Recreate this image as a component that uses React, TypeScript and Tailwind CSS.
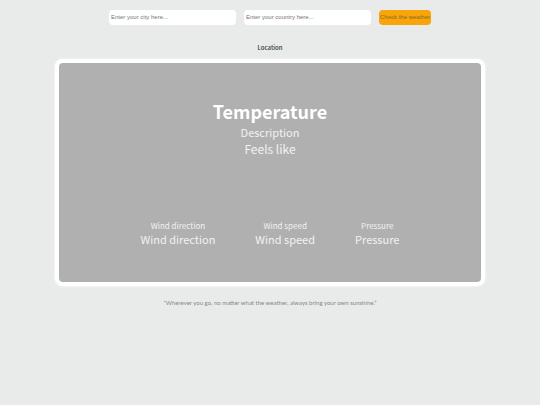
import type { FormEvent } from "react";

type FieldProps = {
  id: string;
  label: string;
  placeholder: string;
};

const details = [
  { label: "Wind direction", value: "Wind direction" },
  { label: "Wind speed", value: "Wind speed" },
  { label: "Pressure", value: "Pressure" }
];

function Field({ id, label, placeholder }: FieldProps) {
  return (
    <div className="w-[127px]">
      <input
        id={id}
        name={id}
        type="text"
        aria-label={label}
        placeholder={placeholder}
        className="block h-[15px] w-full rounded-[4px] bg-white px-[2px] font-['Liberation_Sans',sans-serif] text-[6px] leading-[15px] text-[#333333] placeholder:text-[#757575]"
      />
    </div>
  );
}

export default function App() {
  function handleSubmit(event: FormEvent<HTMLFormElement>) {
    event.preventDefault();
  }

  return (
    <main className="min-h-screen bg-[#e8ebea] pt-[10px] font-['Noto_Sans_CJK_SC',sans-serif]">
      <form onSubmit={handleSubmit} className="flex justify-center gap-2">
        <Field id="city" label="City" placeholder="Enter your city here..." />
        <Field id="country" label="Country" placeholder="Enter your country here..." />
        <button
          type="submit"
          className="h-[15px] w-[52px] rounded-[4px] bg-[#f7a508] font-['Liberation_Sans',sans-serif] text-[6px] leading-[15px] whitespace-nowrap text-[#8a6a2c]"
        >
          Check the weather
        </button>
      </form>

      <h2 className="mt-[18px] text-center text-[6px] leading-[10px] font-medium text-[#333333]">
        Location
      </h2>

      <section className="mx-auto mt-[6px] w-4/5 px-px">
        <div className="rounded-[8px] border-4 border-white bg-white shadow-[0_0_3px_#ffffff]">
          <div className="rounded-[4px] bg-[#b0b0b0] pt-[35px] pb-9 text-center text-[#f2f2f2]">
            <h1 className="text-[18px] leading-[26px] font-bold text-white">Temperature</h1>
            <p className="text-[11px] leading-4">Description</p>
            <p className="text-[12px] leading-[18px]">Feels like</p>

            <dl className="mt-[62px] flex justify-center gap-10">
              {details.map((item) => (
                <div key={item.label}>
                  <dt className="text-[8px] leading-3">{item.label}</dt>
                  <dd className="text-[11px] leading-[14px]">{item.value}</dd>
                </div>
              ))}
            </dl>
          </div>
        </div>
      </section>

      <p className="mt-3 text-center font-['Lato',sans-serif] text-[6px] leading-[10px] text-[#858787]">
        “Wherever you go, no matter what the weather, always bring your own sunshine.”
      </p>
    </main>
  );
}
